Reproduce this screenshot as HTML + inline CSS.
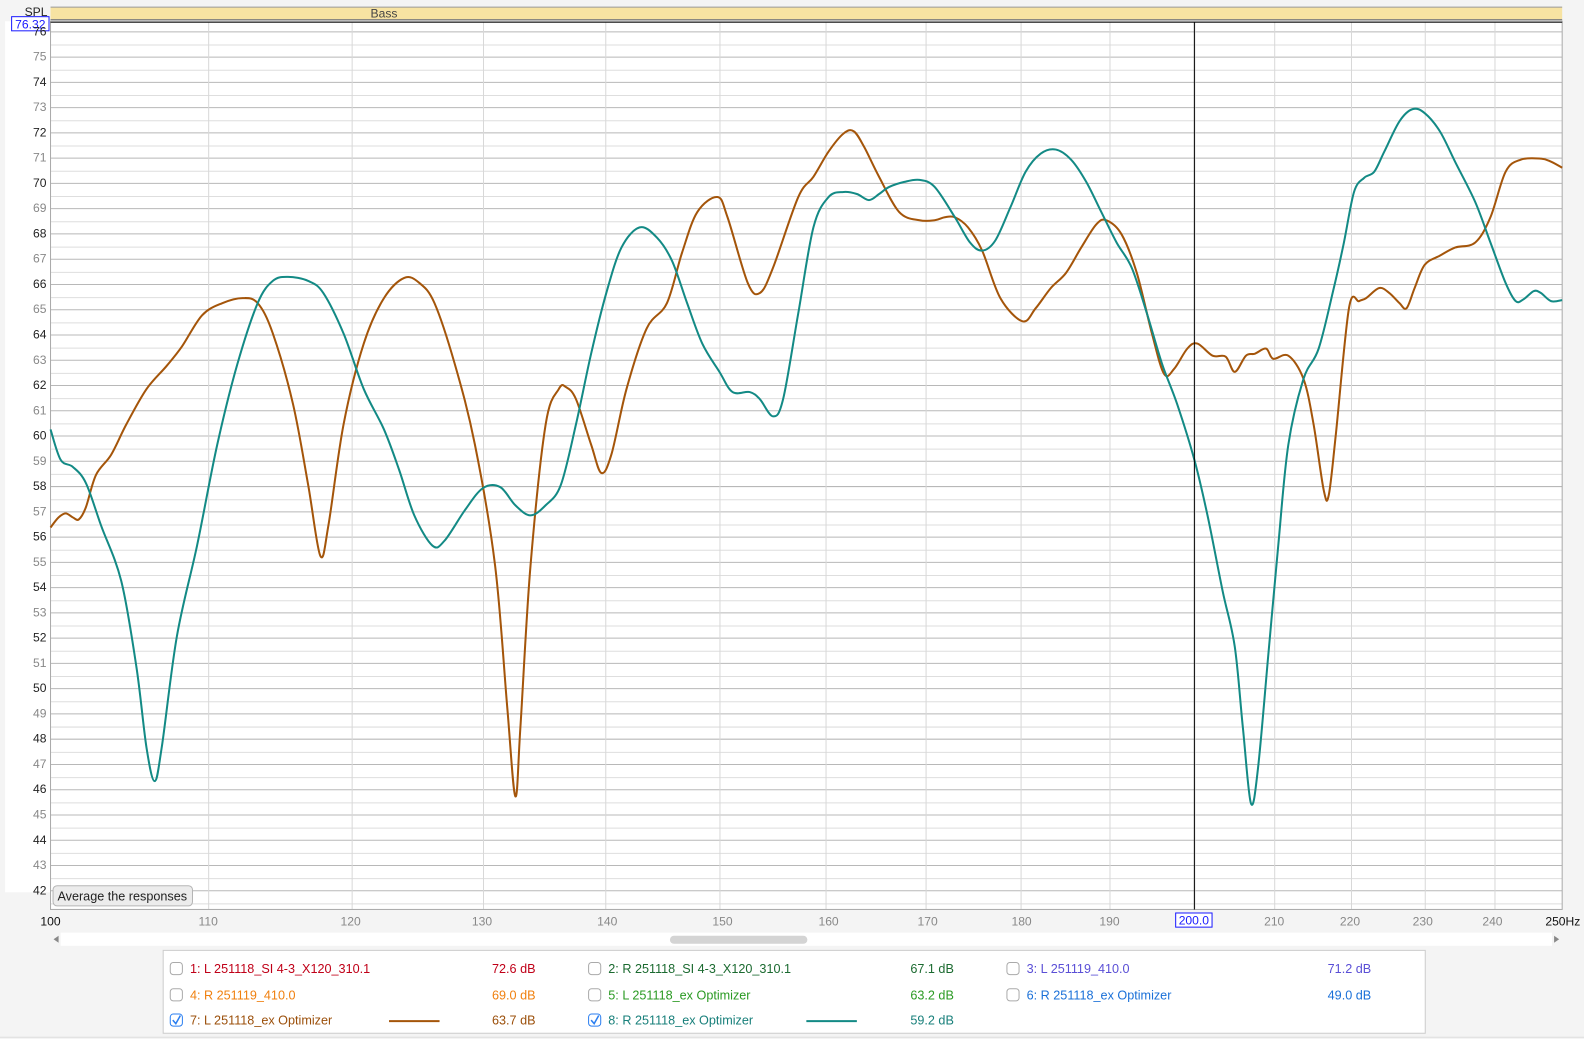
<!DOCTYPE html>
<html><head><meta charset="utf-8"><style>
html,body{margin:0;padding:0;background:#f4f4f4;width:1584px;height:1039px;overflow:hidden}
svg{display:block}
text{font-family:"Liberation Sans",sans-serif}
</style></head><body>
<svg id="s" width="1584" height="1039" viewBox="0 0 1567.6 1028.2" preserveAspectRatio="none" xmlns="http://www.w3.org/2000/svg">
<rect x="0" y="0" width="1567.6" height="1028.2" fill="#f4f4f4"/>
<rect x="5" y="21" width="1541" height="862" fill="#fff"/>
<rect x="50" y="21" width="1496" height="879" fill="#fff"/>
<g id="grid"></g>
<rect x="50" y="21" width="1496" height="879" fill="none" stroke="#aaa" stroke-width="1"/>
<!-- band -->
<rect x="50" y="7" width="1496" height="12" fill="#f7e3a2"/>
<line x1="50" y1="7" x2="1546" y2="7" stroke="#999"/>
<line x1="50" y1="19.5" x2="1546" y2="19.5" stroke="#666"/>
<line x1="50" y1="22" x2="1546" y2="22" stroke="#111"/>
<text x="380" y="17.5" font-size="12" fill="#444" text-anchor="middle">Bass</text>
<text x="47" y="16" font-size="12" fill="#222" text-anchor="end">SPL</text>
<g id="ylab" font-size="12" text-anchor="end"></g>
<rect x="11.5" y="16.5" width="37" height="14" fill="#fff" stroke="#1a1aff"/>
<text x="30" y="28" font-size="12" fill="#1a1aff" text-anchor="middle">76.32</text>
<!-- curves -->
<path id="brown" fill="none" stroke="#a4550a" stroke-width="2"/>
<path id="teal" fill="none" stroke="#138a85" stroke-width="2"/>
<line x1="1182" y1="22" x2="1182" y2="900" stroke="#000" stroke-width="1"/>
<!-- button -->
<rect x="52.5" y="876.5" width="138" height="20" rx="4" fill="#ececec" stroke="#b5b5b5"/>
<text x="121" y="891" font-size="12.5" fill="#222" text-anchor="middle">Average the responses</text>
<!-- x labels -->
<g id="xlab" font-size="12" fill="#888" text-anchor="middle"></g>
<text x="50" y="916" font-size="12" fill="#111" text-anchor="middle">100</text>
<text x="1564" y="916" font-size="12" fill="#111" text-anchor="end">250Hz</text>
<rect x="1163.5" y="903.5" width="36" height="14" fill="#fff" stroke="#1a1aff"/>
<text x="1181.5" y="915" font-size="12" fill="#1a1aff" text-anchor="middle">200.0</text>
<!-- scrollbar -->
<rect x="60" y="923" width="1476" height="13" fill="#fff"/>
<rect x="663" y="926" width="136" height="8" rx="4" fill="#d4d4d4"/>
<path d="M58 926 L53 929.5 L58 933Z" fill="#888"/>
<path d="M1538 926 L1543 929.5 L1538 933Z" fill="#888"/>
<!-- legend -->
<rect x="161.5" y="940.5" width="1249" height="82" fill="#fff" stroke="#ccc"/>
<g font-size="12.5">
<rect x="168.5" y="952.5" width="12" height="12" rx="3" fill="#fff" stroke="#aaa"/>
<text x="188" y="963" fill="#c00018">1: L 251118_SI 4-3_X120_310.1</text>
<text x="530" y="963" fill="#c00018" text-anchor="end">72.6 dB</text>
<rect x="168.5" y="978.5" width="12" height="12" rx="3" fill="#fff" stroke="#aaa"/>
<text x="188" y="989" fill="#f0800f">4: R 251119_410.0</text>
<text x="530" y="989" fill="#f0800f" text-anchor="end">69.0 dB</text>
<rect x="168.5" y="1003.5" width="12" height="12" rx="3" fill="#fff" stroke="#2a7ef0"/>
<path d="M171 1009.5 L174 1013 L178.5 1005" fill="none" stroke="#2a7ef0" stroke-width="1.5"/>
<text x="188" y="1014" fill="#9b4f0a">7: L 251118_ex Optimizer</text>
<line x1="385" y1="1010.5" x2="435" y2="1010.5" stroke="#a4550a" stroke-width="2"/>
<text x="530" y="1014" fill="#9b4f0a" text-anchor="end">63.7 dB</text>

<rect x="582.5" y="952.5" width="12" height="12" rx="3" fill="#fff" stroke="#aaa"/>
<text x="602" y="963" fill="#1b6a30">2: R 251118_SI 4-3_X120_310.1</text>
<text x="944" y="963" fill="#1b6a30" text-anchor="end">67.1 dB</text>
<rect x="582.5" y="978.5" width="12" height="12" rx="3" fill="#fff" stroke="#aaa"/>
<text x="602" y="989" fill="#2a9a22">5: L 251118_ex Optimizer</text>
<text x="944" y="989" fill="#2a9a22" text-anchor="end">63.2 dB</text>
<rect x="582.5" y="1003.5" width="12" height="12" rx="3" fill="#fff" stroke="#2a7ef0"/>
<path d="M585 1009.5 L588 1013 L592.5 1005" fill="none" stroke="#2a7ef0" stroke-width="1.5"/>
<text x="602" y="1014" fill="#177f7a">8: R 251118_ex Optimizer</text>
<line x1="798" y1="1010.5" x2="848" y2="1010.5" stroke="#138a85" stroke-width="2"/>
<text x="944" y="1014" fill="#177f7a" text-anchor="end">59.2 dB</text>

<rect x="996.5" y="952.5" width="12" height="12" rx="3" fill="#fff" stroke="#aaa"/>
<text x="1016" y="963" fill="#5a4fd6">3: L 251119_410.0</text>
<text x="1357" y="963" fill="#5a4fd6" text-anchor="end">71.2 dB</text>
<rect x="996.5" y="978.5" width="12" height="12" rx="3" fill="#fff" stroke="#aaa"/>
<text x="1016" y="989" fill="#1a70d8">6: R 251118_ex Optimizer</text>
<text x="1357" y="989" fill="#1a70d8" text-anchor="end">49.0 dB</text>
</g>
<line x1="0" y1="1026.5" x2="1567.6" y2="1026.5" stroke="#ddd"/>
<!-- static y labels -->
<g font-size="12" text-anchor="end">
<text x="46" y="35" fill="#222">76</text>
<text x="46" y="60" fill="#888">75</text>
<text x="46" y="85" fill="#222">74</text>
<text x="46" y="110" fill="#888">73</text>
<text x="46" y="135" fill="#222">72</text>
<text x="46" y="160" fill="#888">71</text>
<text x="46" y="185" fill="#222">70</text>
<text x="46" y="210" fill="#888">69</text>
<text x="46" y="235" fill="#222">68</text>
<text x="46" y="260" fill="#888">67</text>
<text x="46" y="285" fill="#222">66</text>
<text x="46" y="310" fill="#888">65</text>
<text x="46" y="335" fill="#222">64</text>
<text x="46" y="360" fill="#888">63</text>
<text x="46" y="385" fill="#222">62</text>
<text x="46" y="410" fill="#888">61</text>
<text x="46" y="435" fill="#222">60</text>
<text x="46" y="460" fill="#888">59</text>
<text x="46" y="485" fill="#222">58</text>
<text x="46" y="510" fill="#888">57</text>
<text x="46" y="535" fill="#222">56</text>
<text x="46" y="560" fill="#888">55</text>
<text x="46" y="585" fill="#222">54</text>
<text x="46" y="610" fill="#888">53</text>
<text x="46" y="635" fill="#222">52</text>
<text x="46" y="660" fill="#888">51</text>
<text x="46" y="685" fill="#222">50</text>
<text x="46" y="710" fill="#888">49</text>
<text x="46" y="735" fill="#222">48</text>
<text x="46" y="760" fill="#888">47</text>
<text x="46" y="785" fill="#222">46</text>
<text x="46" y="810" fill="#888">45</text>
<text x="46" y="835" fill="#222">44</text>
<text x="46" y="860" fill="#888">43</text>
<text x="46" y="885" fill="#222">42</text>
</g>
<g font-size="12" fill="#888" text-anchor="middle">
<text x="206" y="916">110</text><text x="347" y="916">120</text><text x="477" y="916">130</text>
<text x="601" y="916">140</text><text x="715" y="916">150</text><text x="820" y="916">160</text>
<text x="918" y="916">170</text><text x="1011" y="916">180</text><text x="1098" y="916">190</text>
<text x="1261" y="916">210</text><text x="1336" y="916">220</text><text x="1408" y="916">230</text>
<text x="1477" y="916">240</text>
</g>
</svg>
<script>
var NS="http://www.w3.org/2000/svg",g=document.getElementById("grid");
function ln(x1,y1,x2,y2,c){var l=document.createElementNS(NS,"line");l.setAttribute("x1",x1);l.setAttribute("y1",y1);l.setAttribute("x2",x2);l.setAttribute("y2",y2);l.setAttribute("stroke",c);l.setAttribute("stroke-width","1");g.appendChild(l);}
for(var v=76;v>=41.5;v-=0.5){var y=Math.round(56+(75-v)*25)+0.5;if(y<22||y>900)continue;ln(50,y,1546,y,(v%1===0)?"#b8b8b8":"#dedede");}
[110,120,130,140,150,160,170,180,190,200,210,220,230,240].forEach(function(f){var x=Math.round(50+1496*Math.log(f/100)/Math.log(2.5))+0.5;ln(x,22,x,900,"#d8d8d8");});
function path(p){var d="M"+p[0][0]+" "+p[0][1];for(var i=0;i<p.length-1;i++){var p0=p[Math.max(0,i-1)],p1=p[i],p2=p[i+1],p3=p[Math.min(p.length-1,i+2)];var c1x=p1[0]+(p2[0]-p0[0])/6,c1y=p1[1]+(p2[1]-p0[1])/6,c2x=p2[0]-(p3[0]-p1[0])/6,c2y=p2[1]-(p3[1]-p1[1])/6;d+=" C"+c1x.toFixed(1)+" "+c1y.toFixed(1)+" "+c2x.toFixed(1)+" "+c2y.toFixed(1)+" "+p2[0]+" "+p2[1];}return d;}
var B=[[50,522],[58,512],[65,508],[72,512],[78,514],[85,502],[95,470],[110,450],[125,420],[145,385],[165,362],[180,343],[200,312],[220,300],[240,295],[255,300],[270,330],[290,400],[305,480],[317,550],[325,520],[340,420],[360,340],[380,295],[400,275],[415,280],[430,300],[450,360],[470,440],[490,560],[502,700],[510,788],[515,720],[525,560],[540,420],[553,385],[560,383],[570,395],[585,440],[595,468],[605,450],[620,385],[640,325],[660,300],[675,250],[690,210],[710,195],[720,215],[740,280],[752,290],[765,265],[790,195],[805,175],[820,150],[835,132],[845,130],[855,145],[870,175],[890,210],[910,218],[925,218],[935,215],[945,215],[958,225],[972,248],[990,295],[1012,318],[1025,305],[1040,285],[1055,270],[1070,245],[1085,222],[1095,218],[1110,232],[1125,270],[1140,330],[1152,370],[1162,365],[1175,345],[1185,340],[1200,352],[1213,353],[1222,368],[1233,352],[1242,350],[1253,345],[1260,355],[1275,352],[1290,375],[1300,420],[1310,485],[1315,490],[1322,430],[1335,305],[1345,298],[1352,295],[1365,285],[1375,290],[1385,300],[1392,305],[1400,285],[1410,262],[1425,253],[1440,245],[1460,240],[1475,215],[1490,170],[1505,158],[1525,157],[1535,160],[1546,166]];
var T=[[50,425],[60,455],[72,462],[85,478],[100,520],[120,575],[135,660],[145,740],[153,773],[160,740],[175,630],[195,540],[215,440],[235,360],[255,300],[270,278],[285,274],[305,278],[320,290],[340,330],[360,385],[380,425],[395,465],[410,510],[428,540],[440,535],[460,505],[478,483],[495,482],[510,500],[525,510],[540,500],[555,480],[570,420],[585,350],[600,290],[615,245],[633,225],[650,235],[665,258],[680,300],[695,340],[712,368],[725,388],[742,388],[752,395],[765,412],[775,395],[790,310],[805,225],[820,195],[835,190],[848,192],[860,198],[870,192],[880,185],[895,180],[910,178],[925,185],[945,215],[960,240],[972,248],[985,238],[1000,205],[1015,170],[1030,152],[1045,148],[1060,158],[1075,180],[1090,210],[1105,240],[1120,265],[1135,310],[1150,360],[1165,400],[1182,455],[1195,510],[1210,585],[1222,640],[1230,720],[1238,795],[1245,760],[1255,650],[1265,540],[1275,440],[1290,375],[1305,345],[1320,285],[1330,240],[1340,190],[1350,176],[1360,170],[1370,150],[1385,120],[1398,108],[1410,112],[1425,130],[1440,160],[1460,200],[1475,240],[1490,280],[1500,298],[1508,296],[1518,288],[1525,290],[1535,298],[1546,297]];
document.getElementById("brown").setAttribute("d",path(B));
document.getElementById("teal").setAttribute("d",path(T));
</script>
</body></html>
